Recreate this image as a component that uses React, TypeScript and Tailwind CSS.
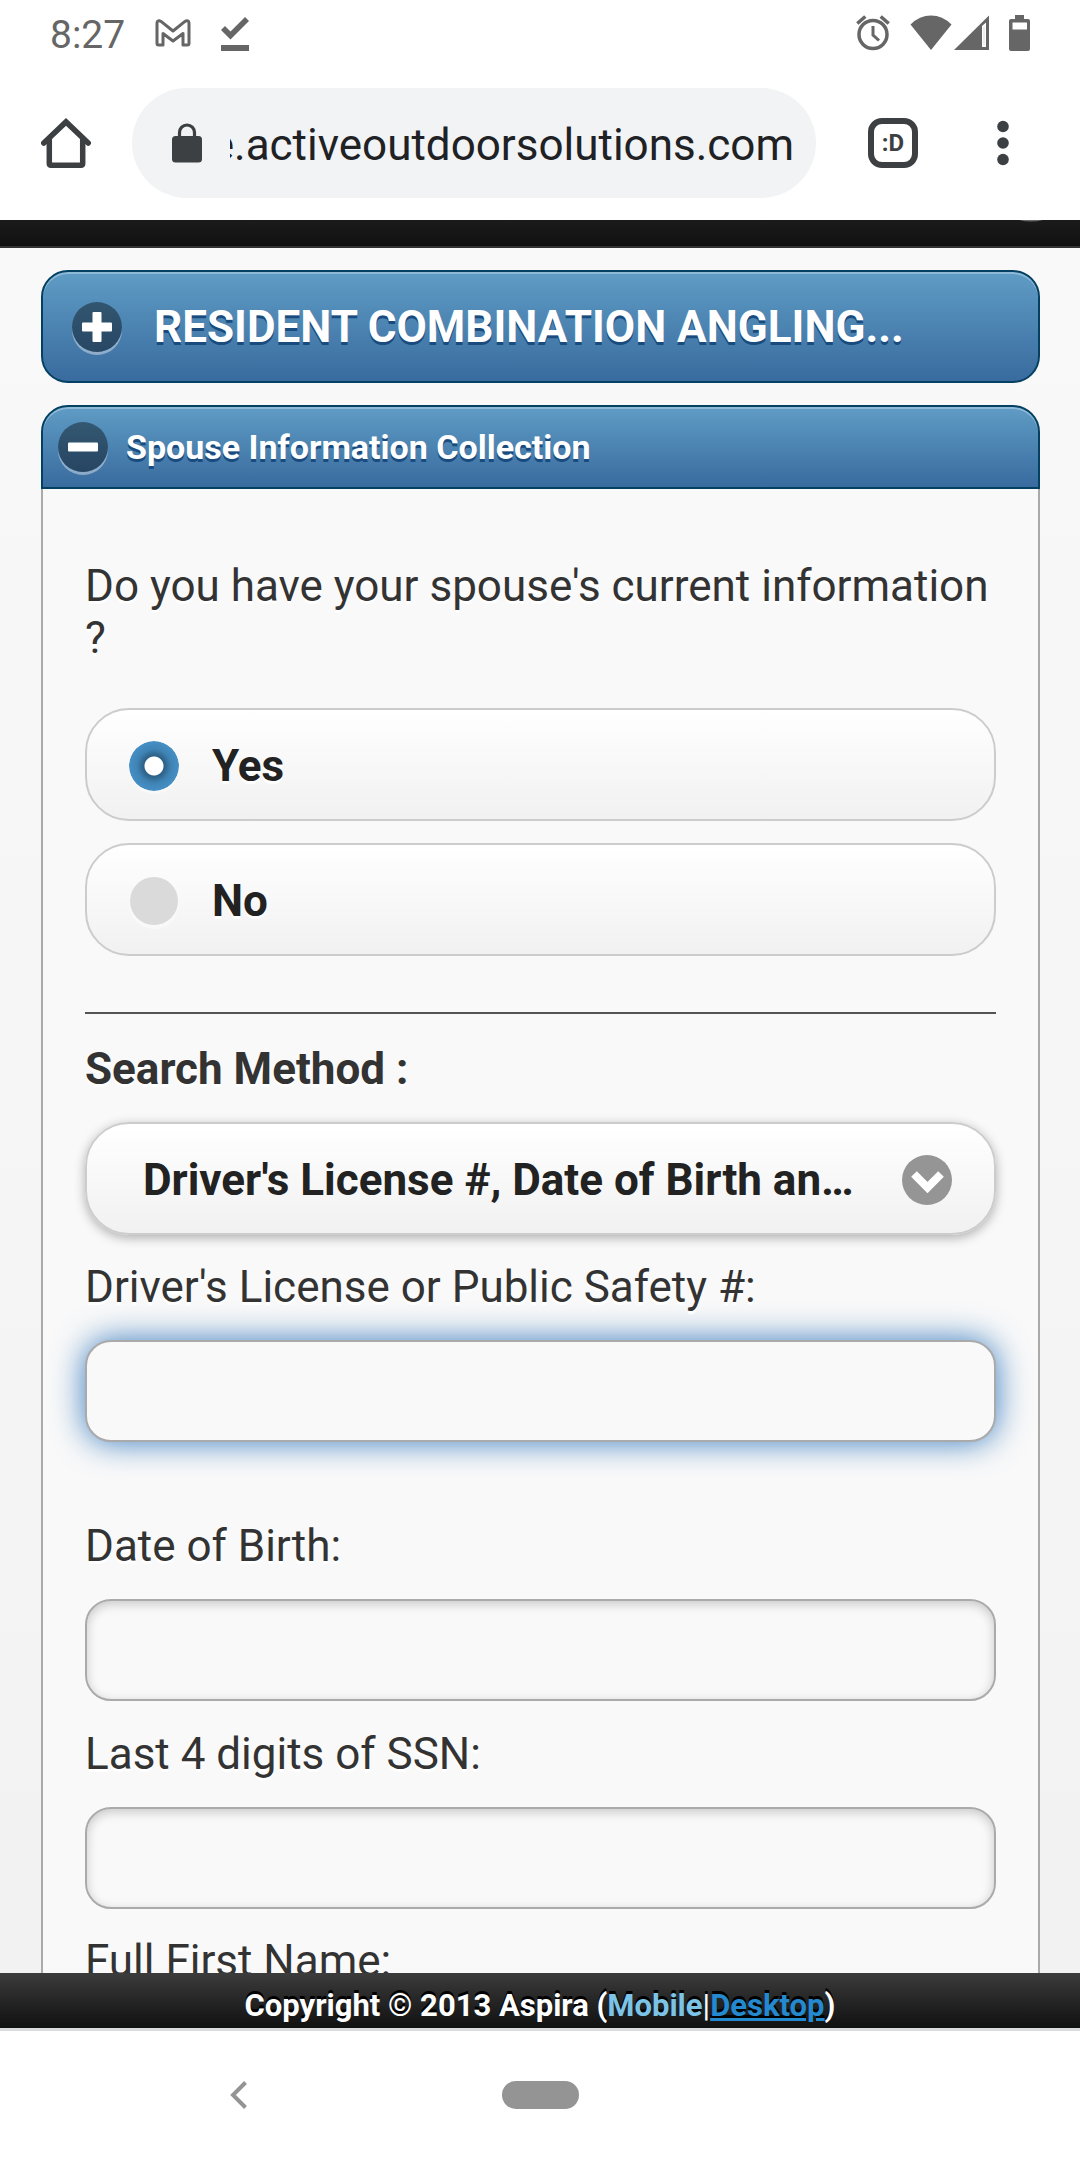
import { useState } from "react";
import type { ReactNode } from "react";

function GmailIcon() {
  return (
    <svg width="36" height="28" viewBox="0 0 36 28" fill="none" stroke="#666" strokeWidth="3" strokeLinejoin="round" aria-hidden="true">
      <path d="M2 4v20.500q0 1.500 1.500 1.500H8V14.500l10 7.500 10-7.500V26h4.500q1.500 0 1.500-1.500V4c0-2-2-3-4-1.600L18 12 6 2.400C4 1 2 2 2 4z" />
    </svg>
  );
}

function DownloadDoneIcon() {
  return (
    <svg width="28" height="35" viewBox="0 0 28 35" fill="#666" aria-hidden="true">
      <path d="M0 13l4-4 5.500 5.500L24 0l4 4L9.500 22.500z" />
      <path d="M0 28h28v6H0z" />
    </svg>
  );
}

function AlarmIcon() {
  return (
    <svg width="34" height="36" viewBox="0 0 34 36" fill="none" stroke="#666" aria-hidden="true">
      <circle cx="17" cy="19.500" r="14" strokeWidth="3.500" />
      <path d="M17 11v9l6 5.500" strokeWidth="3" />
      <path d="M1.300 8.500l8-7M32.700 8.500l-8-7" strokeWidth="3.500" />
    </svg>
  );
}

function WifiIcon() {
  return (
    <svg width="42" height="35" viewBox="0 0 42 35" fill="#666" aria-hidden="true">
      <path d="M21 35L.5 9.500Q9.500 .5 21 .5t20.500 9z" />
    </svg>
  );
}

function SignalIcon() {
  return (
    <svg width="35" height="35" viewBox="0 0 35 35" aria-hidden="true">
      <path d="M0 35L35 .5V35z" fill="#666" />
      <path d="M28 11l4-3.500V32h-4z" fill="#fff" />
      <path d="M29.500 11.500h1v18h-1z" fill="#ddd" />
    </svg>
  );
}

function BatteryIcon() {
  return (
    <svg width="21" height="36" viewBox="0 0 21 36" aria-hidden="true">
      <path d="M6 0h9v4h4q2 0 2 2v28q0 2-2 2H2q-2 0-2-2V6q0-2 2-2h4z" fill="#666" />
      <path d="M3.500 7.500h14.500v7H3.500z" fill="#fff" />
    </svg>
  );
}

function HomeIcon() {
  return (
    <svg width="50" height="50" viewBox="0 0 50 50" fill="none" stroke="#3c4043" strokeWidth="5.500" aria-hidden="true">
      <path d="M2.800 25L25 3.900 47.200 25" strokeLinecap="round" strokeLinejoin="miter" />
      <path d="M8.300 20v25.500q0 1.700 1.700 1.700h30q1.700 0 1.700-1.700V20" />
    </svg>
  );
}

function LockIcon() {
  return (
    <svg width="30" height="40" viewBox="0 0 30 40" aria-hidden="true">
      <rect y="13" width="30" height="26.500" rx="3.500" fill="#3c4043" />
      <path d="M7.500 15V9.500a7.500 7.500 0 0 1 15 0V15" fill="none" stroke="#3c4043" strokeWidth="3.200" />
    </svg>
  );
}

function MoreIcon() {
  return (
    <svg width="12" height="46" viewBox="0 0 12 46" fill="#3c4043" aria-hidden="true">
      <circle cx="6" cy="6.500" r="5.800" />
      <circle cx="6" cy="23" r="5.800" />
      <circle cx="6" cy="39.500" r="5.800" />
    </svg>
  );
}

function HeadingIcon({ open }: { open: boolean }) {
  return (
    <span className="flex size-[50px] shrink-0 items-center justify-center rounded-full bg-black/40 shadow-[0_3px_0_rgba(255,255,255,0.4)]">
      <svg width="30" height="30" viewBox="0 0 30 30" fill="#fff" aria-hidden="true">
        <rect y="10.500" width="30" height="9" rx="1" />
        {!open && <rect x="10.500" width="9" height="30" rx="1" />}
      </svg>
    </span>
  );
}

const heading =
  "flex w-full items-center border-2 border-[#044062] bg-linear-to-b from-[#5f9cc5] to-[#396b9e] text-left font-bold text-white shadow-[inset_0_2px_0_rgba(255,255,255,0.3)] [text-shadow:0_3px_0_#194b7e]";

function RadioRow({ label, checked, onSelect }: { label: string; checked: boolean; onSelect: () => void }) {
  return (
    <label className="flex h-[113px] items-center gap-[33px] rounded-[44px] border-2 border-[#ccc] bg-linear-to-b from-white to-[#f1f1f1] pt-[3px] pl-[42px] font-bold text-[#222] [text-shadow:0_3px_0_#fff]">
      <input
        type="radio"
        name="spouse-info"
        checked={checked}
        onChange={onSelect}
        className="size-[50px] appearance-none rounded-full border border-transparent bg-[#dadada] bg-clip-padding shadow-[0_3px_0_rgba(255,255,255,0.4)] outline-none checked:border-0 checked:bg-[radial-gradient(circle_at_center,#fff_0,#fff_9px,#2c5f85_10px,#3f83b4_17px,#4590c7_25px)]"
      />
      {label}
    </label>
  );
}

function Field({ id, label, focused, className }: { id: string; label: string; focused?: boolean; className?: string }) {
  return (
    <div className={className}>
      <label htmlFor={id} className="relative z-10 block">
        {label}
      </label>
      <input
        id={id}
        type="text"
        className={
          focused
            ? "mt-[27px] block h-[102px] w-full rounded-[26px] border-2 border-[#aaa] bg-[#f9f9f9] px-3 shadow-[0_0_33px_#387bbe] outline-none"
            : "mt-[27px] block h-[102px] w-full rounded-[26px] border-2 border-[#aaa] bg-[#f9f9f9] px-3 shadow-[inset_0_3px_11px_rgba(0,0,0,0.2)] outline-none"
        }
      />
    </div>
  );
}

function BarButton({ label, children }: { label: string; children: ReactNode }) {
  return (
    <button type="button" aria-label={label} className="flex h-[110px] shrink-0 items-center justify-center">
      {children}
    </button>
  );
}

export default function App() {
  const [hasInfo, setHasInfo] = useState(true);

  return (
    <div className="flex h-screen flex-col bg-white font-['Roboto',sans-serif] text-[44px] leading-[52px] text-[#333]">
      <header className="shrink-0 pb-[22px]">
        <div className="flex h-[88px] items-start px-[50px] pt-[15px] text-[#666]">
          <time className="w-[74px] pt-px text-[39px] leading-[38px]">8:27</time>
          <span className="ml-[31px] pt-[4px]"><GmailIcon /></span>
          <span className="ml-[30px] pt-[2px]"><DownloadDoneIcon /></span>
          <span className="ml-auto"><AlarmIcon /></span>
          <span className="ml-[20px]"><WifiIcon /></span>
          <span className="ml-[2px]"><SignalIcon /></span>
          <span className="ml-[20px]"><BatteryIcon /></span>
        </div>
        <div className="flex items-center pr-[71px] pl-[41px]">
          <BarButton label="Home"><HomeIcon /></BarButton>
          <div className="ml-[41px] flex h-[110px] min-w-0 flex-1 items-center rounded-full bg-[#f1f3f4] pr-[22px] pl-[40px]">
            <LockIcon />
            <div className="ml-[28px] flex min-w-0 flex-1 justify-end overflow-hidden pt-[4px] whitespace-nowrap text-[#202124]">
              e.activeoutdoorsolutions.com
            </div>
          </div>
          <div className="ml-[52px]">
            <BarButton label="Tabs">
              <span className="flex size-[50px] items-center justify-center rounded-[14px] border-6 border-[#3c4043] text-[24px] leading-none font-bold text-[#3c4043]">
                :D
              </span>
            </BarButton>
          </div>
          <div className="ml-[79px]">
            <BarButton label="More"><MoreIcon /></BarButton>
          </div>
        </div>
      </header>

      <main className="min-h-0 flex-1 overflow-y-auto bg-linear-to-b from-[#f9f9f9] to-[#f2f2f2] [scrollbar-width:none]">
        <div className="flex h-[28px] justify-end overflow-hidden border-b-2 border-[#333] bg-linear-to-b from-[#1b1b1b] to-[#111] pr-[37px]">
          <svg width="24" height="2" viewBox="0 0 24 2" aria-hidden="true">
            <path d="M0 0h24q-12 3-24 0z" fill="#666" />
          </svg>
        </div>
        <div className="pt-[22px] pr-[40px] pl-[41px]">
          <button type="button" className={`${heading} h-[113px] gap-[32px] rounded-[27px] pl-[29px]`}>
            <HeadingIcon open={false} />
            RESIDENT COMBINATION ANGLING...
          </button>
          <button type="button" aria-expanded="true" className={`${heading} mt-[22px] h-[84px] gap-[18px] rounded-t-[27px] pl-[15px] text-[34px]`}>
            <HeadingIcon open />
            Spouse Information Collection
          </button>
          <section className="border-x-2 border-[#aaa] bg-[#f9f9f9] px-[42px] pt-[71px] pb-11 [text-shadow:0_3px_0_#fff]">
            <p>
              Do you have your spouse's current information
              <br />?
            </p>
            <div className="mt-[44px] space-y-[22px]">
              <RadioRow label="Yes" checked={hasInfo} onSelect={() => setHasInfo(true)} />
              <RadioRow label="No" checked={!hasInfo} onSelect={() => setHasInfo(false)} />
            </div>
            <hr className="mt-[56px] border-t-2 border-[#555]" />
            <label htmlFor="method" className="mt-[29px] block font-bold">Search Method :</label>
            <div className="relative mt-[27px]">
              <select
                id="method"
                className="block h-[113px] w-full appearance-none overflow-hidden rounded-[44px] border-2 border-[#ccc] bg-linear-to-b from-white to-[#f1f1f1] pt-[2px] pr-[130px] pl-[56px] font-bold text-ellipsis whitespace-nowrap text-[#222] shadow-[0_3px_11px_rgba(0,0,0,0.3)] outline-none"
              >
                <option>Driver's License #, Date of Birth and Last 4 digits of SSN</option>
              </select>
              <svg className="pointer-events-none absolute top-[33px] right-[44px]" width="50" height="50" viewBox="0 0 50 50" aria-hidden="true">
                <circle cx="25" cy="25" r="25" fill="#959595" />
                <path d="M12 19l13.500 13.500L39 19" fill="none" stroke="#fff" strokeWidth="8" />
              </svg>
            </div>
            <Field id="license" label="Driver's License or Public Safety #:" focused className="mt-[26px]" />
            <Field id="dob" label="Date of Birth:" className="mt-[78px]" />
            <Field id="ssn" label="Last 4 digits of SSN:" className="mt-[27px]" />
            <Field id="first-name" label="Full First Name:" className="mt-[26px]" />
          </section>
        </div>
      </main>

      <footer className="relative z-20 flex h-[58px] shrink-0 items-center justify-center border-b-3 border-[#dadce0] bg-linear-to-b from-[#3c3c3c] to-[#111] pt-[10px] text-[31px] leading-[38px] font-bold text-white [text-shadow:0_-3px_0_#000]">
        Copyright © 2013 Aspira (<span className="text-[#7cc4e7]">Mobile</span>
        <span className="font-normal">|</span>
        <a href="#desktop" className="text-[#2489ce] underline">Desktop</a>)
      </footer>

      <nav className="grid h-[129px] shrink-0 grid-cols-3 items-center justify-items-center pb-[2px]">
        <button type="button" aria-label="Back" className="pl-[118px]">
          <svg width="18" height="28" viewBox="0 0 18 28" fill="none" stroke="#949494" strokeWidth="4" aria-hidden="true">
            <path d="M15.500 1.500L3 14l12.500 12.500" />
          </svg>
        </button>
        <button type="button" aria-label="Home screen" className="h-[28px] w-[77px] rounded-full bg-[#949494]" />
      </nav>
    </div>
  );
}
